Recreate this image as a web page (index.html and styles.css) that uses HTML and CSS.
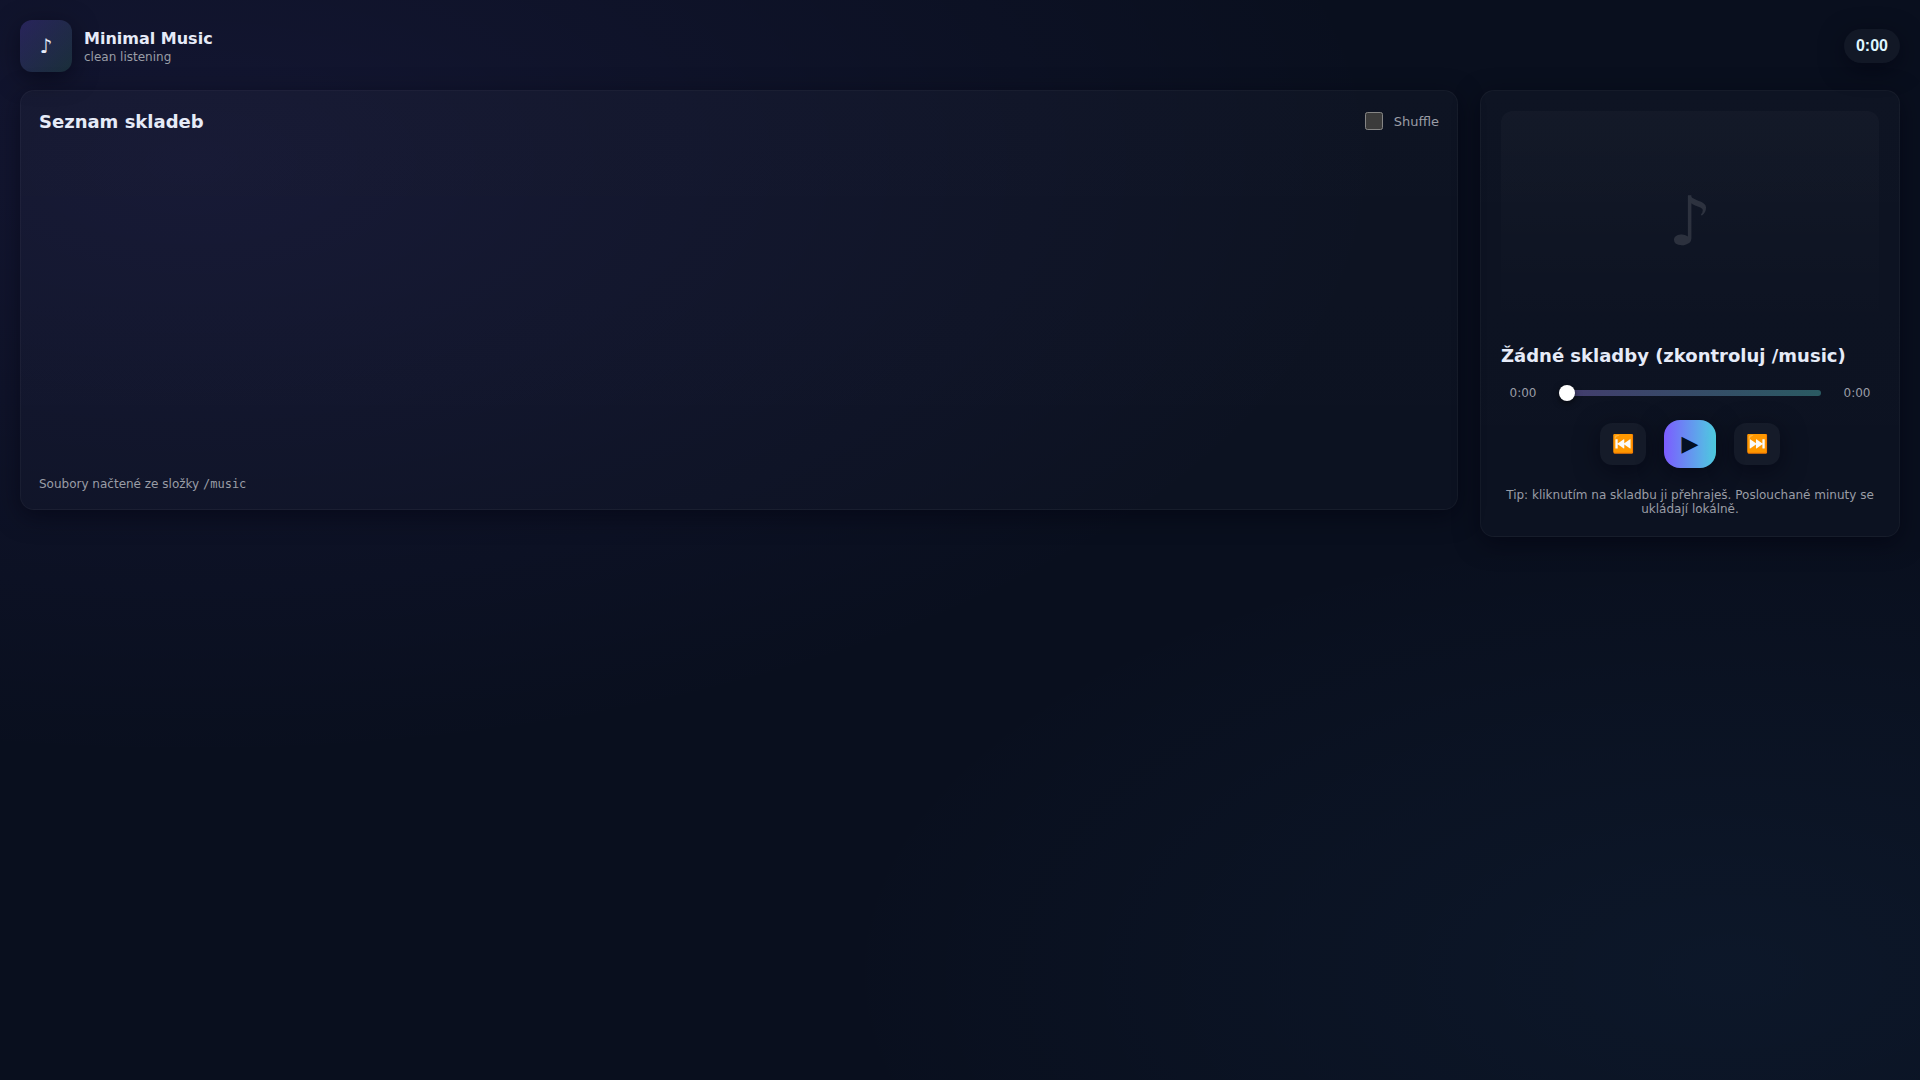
FILE: index.html
```
<!DOCTYPE html>
<html lang="cs">
<head>
  <meta charset="UTF-8">
  <meta name="viewport" content="width=device-width, initial-scale=1">
  <title>Minimal Music</title>
  <link rel="stylesheet" href="styles.css">
</head>
<body>
  <header class="topbar">
    <div class="brand">
      <div class="logo">♪</div>
      <div>
        <h1>Minimal Music</h1>
        <p class="subtitle">clean listening</p>
      </div>
    </div>
    <button class="minutes" id="minutes" type="button">0:00</button>
  </header>

  <main class="layout">
    <section class="card list-card">
      <div class="list-header">
        <h2>Seznam skladeb</h2>
        <label class="shuffle" for="shuffle">
          <input type="checkbox" id="shuffle">
          Shuffle
        </label>
      </div>
      <ul class="tracks" id="tracks"></ul>
      <p class="note">Soubory načtené ze složky <code>/music</code></p>
    </section>

    <aside class="card player">
      <div class="cover">♪</div>
      <h2 id="title">Žádné skladby (zkontroluj /music)</h2>
      <div class="progress">
        <span class="time">0:00</span>
        <input type="range" id="seek" min="0" max="100" value="0" aria-label="Pozice ve skladbě">
        <span class="time">0:00</span>
      </div>
      <div class="controls">
        <button class="btn" type="button" aria-label="Předchozí">⏮️</button>
        <button class="btn play" type="button" aria-label="Přehrát">▶</button>
        <button class="btn" type="button" aria-label="Další">⏭️</button>
      </div>
      <p class="tip">Tip: kliknutím na skladbu ji přehraješ. Poslouchané minuty se ukládají lokálně.</p>
    </aside>
  </main>
</body>
</html>
```

FILE: styles.css
```
:root {
  --bg: #090f1e;
  --text: #e6ebf8;
  --muted: #9a9da6;
  --accent: #7c5cff;
  --accent2: #4ecde0;
  --shadow: 0 6px 24px rgba(2,2,14,0.5);
}
* {
  box-sizing: border-box;
}
body {
  margin: 0;
  padding: 20px;
  min-height: 100vh;
  font-family: "DejaVu Sans", sans-serif;
  color: var(--text);
  background:
    radial-gradient(1200px 600px at 10% 15%, rgba(124,92,255,0.09), transparent),
    radial-gradient(900px 450px at 90% 90%, rgba(78,180,255,0.05), transparent),
    var(--bg);
}
h1, h2, p, ul {
  margin: 0;
}
h2 {
  font-size: 18px;
  line-height: 21px;
}

/* Horní lišta */
.topbar {
  display: flex;
  justify-content: space-between;
  align-items: center;
  margin-bottom: 18px;
}
.brand {
  display: flex;
  align-items: center;
  gap: 12px;
}
.logo {
  width: 52px;
  height: 52px;
  border-radius: 12px;
  display: grid;
  place-items: center;
  font-size: 20px;
  background: linear-gradient(135deg, rgba(124,92,255,0.22), rgba(78,205,130,0.14));
  box-shadow: var(--shadow);
}
h1 {
  margin-bottom: 2px;
  font-size: 16px;
  line-height: 19px;
}
.subtitle {
  font-size: 12px;
  color: var(--muted);
}
.minutes {
  border: 0;
  border-radius: 17px;
  padding: 8px 12px;
  font: bold 16px "Liberation Sans", sans-serif;
  color: #dff6ff;
  background: rgba(255,255,255,0.04);
  box-shadow: var(--shadow);
}

/* Rozložení */
.layout {
  display: grid;
  grid-template-columns: 1fr 420px;
  gap: 22px;
  align-items: start;
}
.card {
  border: 1px solid rgba(255,255,255,0.04);
  border-radius: 14px;
  background: linear-gradient(180deg, rgba(255,255,255,0.025), rgba(255,255,255,0.015));
  box-shadow: var(--shadow);
}
.list-card {
  display: flex;
  flex-direction: column;
  min-height: 420px;
  padding: 18px;
}
.list-header {
  display: flex;
  justify-content: space-between;
  align-items: center;
  min-height: 24px;
}
.shuffle {
  display: flex;
  align-items: center;
  gap: 11px;
  font-size: 13px;
  color: var(--muted);
}
.shuffle input {
  width: 18px;
  height: 18px;
  margin: 0;
  color-scheme: dark;
}
.tracks {
  flex: 1;
  padding: 0;
  list-style: none;
}
.note {
  font-size: 12px;
  color: var(--muted);
}
code {
  font-family: "DejaVu Sans Mono", monospace;
}

/* Přehrávač */
.player {
  display: flex;
  flex-direction: column;
  gap: 14px;
  padding: 20px;
}
.cover {
  height: 220px;
  border-radius: 12px;
  display: grid;
  place-items: center;
  font-size: 68px;
  color: rgba(255,255,255,0.12);
  background: linear-gradient(180deg, rgba(255,255,255,0.025), transparent);
}
.progress {
  display: flex;
  align-items: center;
  gap: 14px;
  min-height: 26px;
}
.time {
  width: 44px;
  text-align: center;
  font-size: 12px;
  color: var(--muted);
}
.progress input {
  -webkit-appearance: none;
  appearance: none;
  flex: 1;
  min-width: 0;
  height: 6px;
  margin: 0;
  border-radius: 6px;
  background: linear-gradient(90deg, #433c6e, #2a5a62);
}
.progress input::-webkit-slider-thumb {
  -webkit-appearance: none;
  width: 16px;
  height: 16px;
  border-radius: 50%;
  background: #fff;
  box-shadow: 0 2px 6px rgba(0,0,0,0.6);
}
.controls {
  display: flex;
  justify-content: center;
  align-items: center;
  gap: 18px;
}
.btn {
  width: 46px;
  height: 42px;
  padding: 0 0 2px;
  border: 0;
  border-radius: 12px;
  font: 18px "DejaVu Sans", sans-serif;
  color: var(--text);
  background: rgba(255,255,255,0.04);
  box-shadow: var(--shadow);
  cursor: pointer;
}
.play {
  width: 52px;
  height: 48px;
  border-radius: 16px;
  font-size: 22px;
  color: #041022;
  background: linear-gradient(90deg, var(--accent), var(--accent2));
}
.tip {
  padding-top: 6px;
  font-size: 12px;
  text-align: center;
  color: var(--muted);
}

@media (max-width: 900px) {
  .layout {
    grid-template-columns: 1fr;
  }
}
```
